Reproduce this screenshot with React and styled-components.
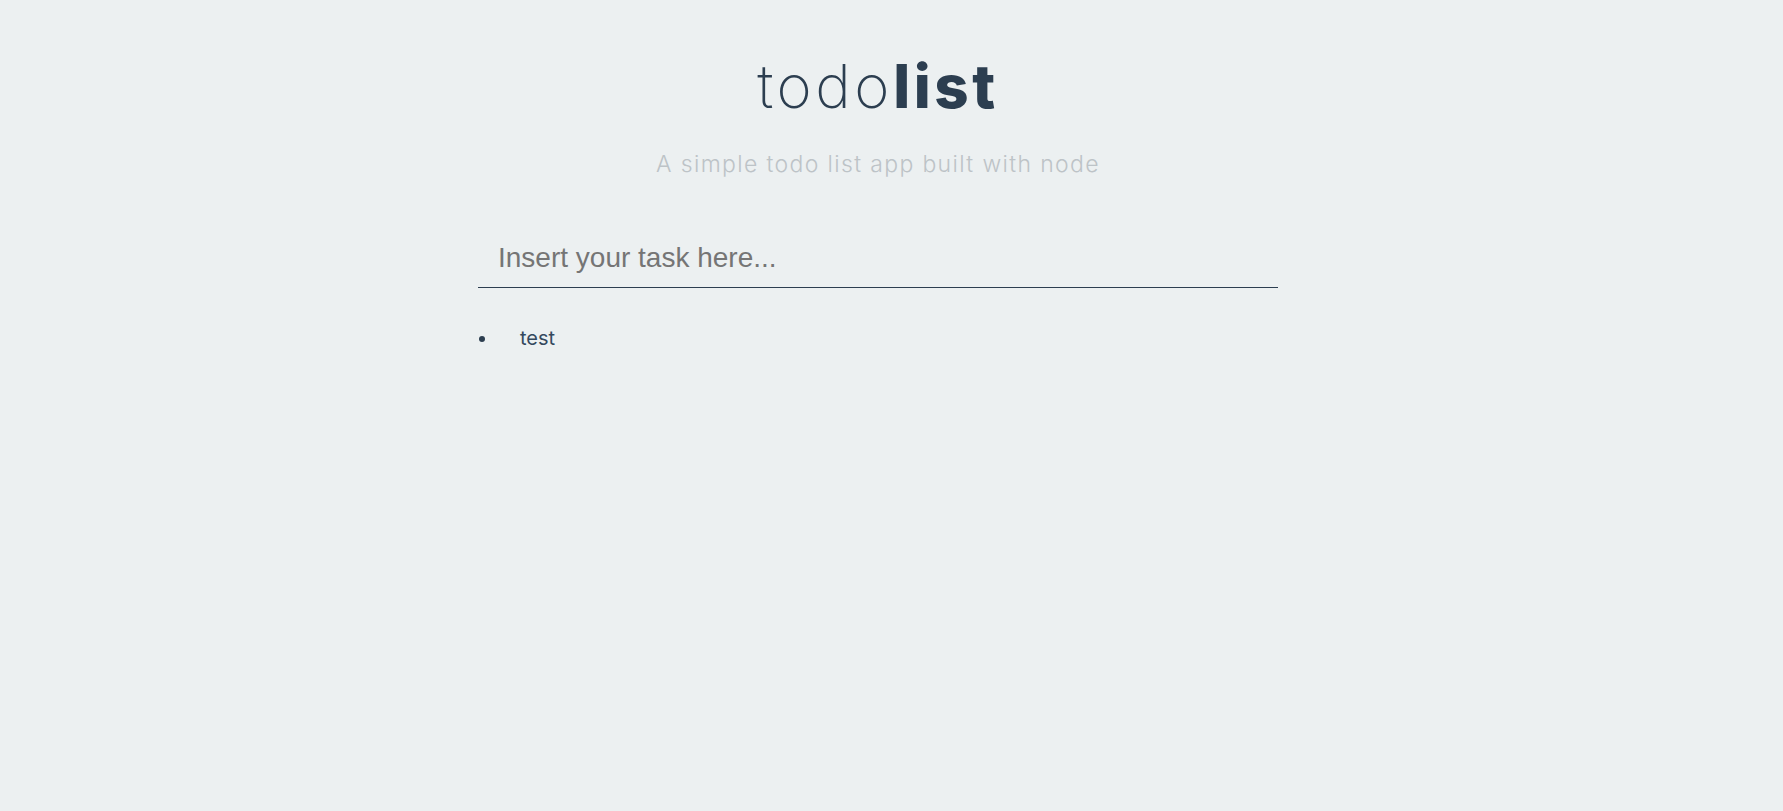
import React, { useState } from "react";
import styled, { createGlobalStyle } from "styled-components";

const GlobalStyle = createGlobalStyle`
    body {
        margin: 0;
        background: #ecf0f1;
        font-family: "Inter", "Noto Sans", sans-serif;
    }
`;

const Page = styled.div`
    display: flex;
    flex-direction: column;
    align-items: center;
    padding: 50px 27px 0 0;
`;

const Title = styled.h1`
    margin: 0;
    font-size: 60px;
    line-height: 72px;
    font-weight: 200;
    color: #2c3e50;
    letter-spacing: 3.6px;

    b {
        font-weight: 800;
    }
`;

const Subtitle = styled.p`
    margin: 28px 0 0;
    font-size: 23px;
    line-height: 28px;
    font-weight: 300;
    letter-spacing: 1.35px;
    color: #bdc3c7;
`;

const Content = styled.div`
    width: 800px;
    margin-top: 58px;
`;

const TaskInput = styled.input`
    box-sizing: border-box;
    width: 100%;
    height: 52px;
    padding: 0 20px 8px;
    border: none;
    border-bottom: 1px solid #2c3e50;
    background: transparent;
    font-family: "Liberation Sans", Arial, sans-serif;
    font-size: 28px;
    color: #2c3e50;
    outline: none;

    &::placeholder {
        color: #757575;
    }
`;

const TaskList = styled.ul`
    margin: 38px 0 0;
    padding: 0;
    list-style: none;
    color: #34495e;
`;

const Task = styled.li`
    display: flex;
    align-items: baseline;
    font-size: 20px;
    line-height: 24px;
    font-weight: 400;

    &::before {
        content: "";
        width: 6px;
        height: 6px;
        margin: 0 35px 0 1px;
        border-radius: 50%;
        background: #2c3e50;
        transform: translateY(-3px);
    }
`;

const App = () => {
    const [task, setTask] = useState("");
    const [tasks] = useState(["test"]);

    return (
        <>
            <GlobalStyle />
            <Page>
                <Title>todo<b>list</b></Title>
                <Subtitle>A simple todo list app built with node</Subtitle>
                <Content>
                    <TaskInput
                        type="text"
                        placeholder="Insert your task here..."
                        value={task}
                        onChange={(e) => setTask(e.target.value)}
                    />
                    <TaskList>
                        {tasks.map((t) => (
                            <Task key={t}>{t}</Task>
                        ))}
                    </TaskList>
                </Content>
            </Page>
        </>
    );
};

export default App;
